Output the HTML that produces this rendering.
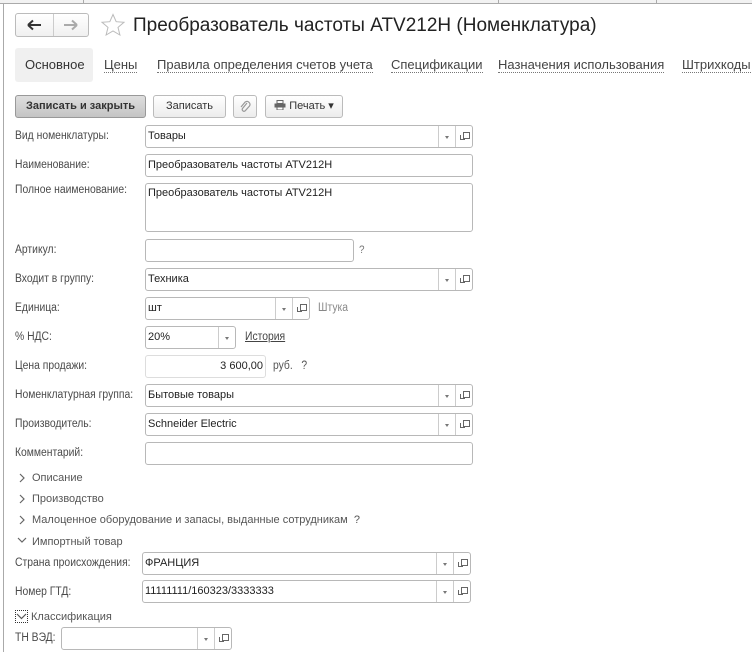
<!DOCTYPE html>
<html><head><meta charset="utf-8"><style>
*{box-sizing:border-box;margin:0;padding:0}
body{width:752px;height:652px;background:#fff;font-family:"Liberation Sans",Arial,sans-serif;position:relative;overflow:hidden;color:#333}
.a{position:absolute;white-space:nowrap}
.lbl{position:absolute;font-size:11.5px;color:#4a4a4a;white-space:nowrap;transform:scaleX(0.9);transform-origin:left}
.f{position:absolute;border:1px solid #b8b8b8;border-radius:3px;background:#fff;font-size:11px;color:#222;padding:0 2px;height:23px;line-height:21px;white-space:nowrap}
.dd{position:absolute;top:0;bottom:0;border-left:1px solid #ccc;width:17px}
.dd:after{content:"";position:absolute;left:6px;top:10px;border:2.5px solid transparent;border-top:3px solid #777}
.op{position:absolute;top:0;bottom:0;border-left:1px solid #ccc;width:17px}
.op:before{content:"";position:absolute;left:7px;top:6px;width:5px;height:5px;border:1px solid #666}
.op:after{content:"";position:absolute;left:4px;top:9px;width:4px;height:4px;border-left:1px solid #666;border-bottom:1px solid #666}
.tab{position:absolute;top:58px;font-size:13px;color:#444;border-bottom:1px dotted #777;line-height:14px}
.btn{position:absolute;top:95px;height:23px;border:1px solid #bbb;border-radius:3px;background:linear-gradient(#fff,#ececec);font-size:11.5px;color:#333;text-align:center;line-height:21px}
.sec{position:absolute;left:32px;font-size:11px;color:#555;white-space:nowrap}
</style></head><body>
<div class="a" style="left:0;top:0;width:752px;height:4px;background:#f2f2f2;border-bottom:1px solid #aaa"></div>
<div class="a" style="left:83px;top:0;width:1px;height:4px;background:#aaa"></div>
<div class="a" style="left:498px;top:0;width:1px;height:4px;background:#aaa"></div>
<div class="a" style="left:656px;top:0;width:1px;height:4px;background:#aaa"></div>
<div class="a" style="left:3px;top:4px;width:1px;height:648px;background:#aaa"></div>

<div class="a" style="left:15px;top:13px;width:74px;height:24px;border:1px solid #bbb;border-radius:3px;background:linear-gradient(#fff,#f0f0f0)"></div>
<div class="a" style="left:53px;top:14px;width:1px;height:22px;background:#ccc"></div>
<svg class="a" style="left:26px;top:19px" width="16" height="12"><path d="M2 6h13M2 6l5-4.5M2 6l5 4.5" fill="none" stroke="#333" stroke-width="2"/></svg>
<svg class="a" style="left:63px;top:19px" width="16" height="12"><path d="M1 6h13M14 6l-5-4.5M14 6l-5 4.5" fill="none" stroke="#aaa" stroke-width="2"/></svg>
<svg class="a" style="left:100px;top:13px" width="26" height="24" viewBox="0 0 26 24"><path d="M13 1.5l3.2 7.2 7.8.6-6 5.1 1.9 7.6L13 17.9 6.1 22l1.9-7.6-6-5.1 7.8-.6z" fill="none" stroke="#bbb" stroke-width="1"/></svg>
<div class="a" style="left:133px;top:13px;font-size:19px;color:#222;line-height:26px">Преобразователь частоты ATV212H (Номенклатура)</div>

<div class="a" style="left:15px;top:48px;width:78px;height:34px;background:#f0f0f0;border-radius:3px"></div>
<div class="a" style="left:25px;top:58px;font-size:13px;color:#333;line-height:14px">Основное</div>
<div class="tab" style="left:104px">Цены</div>
<div class="tab" style="left:157px">Правила определения счетов учета</div>
<div class="tab" style="left:391px">Спецификации</div>
<div class="tab" style="left:498px">Назначения использования</div>
<div class="tab" style="left:682px">Штрихкоды</div>

<div class="btn" style="left:15px;width:131px;background:linear-gradient(#dedede,#c4c4c4);border-color:#999;font-weight:bold;color:#333;font-size:11px">Записать и закрыть</div>
<div class="btn" style="left:153px;width:73px;font-size:11px">Записать</div>
<div class="btn" style="left:233px;width:24px"><svg width="12" height="14" style="margin-top:4px"><path d="M8 3L3.5 8.5a1.8 1.8 0 0 0 2.6 2.4L10.5 6a3 3 0 0 0-4.3-4L2 7" fill="none" stroke="#999" stroke-width="1.2"/></svg></div>
<div class="btn" style="left:265px;width:78px;font-size:11px"><svg width="12" height="10" style="vertical-align:-1px"><rect x="3" y="0.5" width="6" height="3" fill="none" stroke="#666"/><rect x="0.5" y="3.5" width="11" height="4" fill="#666"/><rect x="3" y="7" width="6" height="3" fill="#fff" stroke="#666"/></svg> Печать ▾</div>

<div class="lbl" style="left:15px;top:130px">Вид номенклатуры:</div>
<div class="f" style="left:145px;top:125px;width:328px">Товары<div class="dd" style="right:17px"></div><div class="op" style="right:0"></div></div>
<div class="lbl" style="left:15px;top:159px">Наименование:</div>
<div class="f" style="left:145px;top:154px;width:328px">Преобразователь частоты ATV212H</div>
<div class="lbl" style="left:15px;top:184px">Полное наименование:</div>
<div class="f" style="left:145px;top:183px;width:328px;height:49px;line-height:18px">Преобразователь частоты ATV212H</div>
<div class="lbl" style="left:15px;top:244px">Артикул:</div>
<div class="f" style="left:145px;top:239px;width:209px"></div>
<div class="lbl" style="left:359px;top:244px;color:#777;font-size:11px">?</div>
<div class="lbl" style="left:15px;top:273px">Входит в группу:</div>
<div class="f" style="left:145px;top:268px;width:328px">Техника<div class="dd" style="right:17px"></div><div class="op" style="right:0"></div></div>
<div class="lbl" style="left:15px;top:302px">Единица:</div>
<div class="f" style="left:145px;top:297px;width:165px">шт<div class="dd" style="right:17px"></div><div class="op" style="right:0"></div></div>
<div class="lbl" style="left:318px;top:302px;color:#888">Штука</div>
<div class="lbl" style="left:15px;top:331px">% НДС:</div>
<div class="f" style="left:145px;top:326px;width:91px">20%<div class="dd" style="right:0"></div></div>
<div class="lbl" style="left:245px;top:331px;color:#444;text-decoration:underline">История</div>
<div class="lbl" style="left:15px;top:360px">Цена продажи:</div>
<div class="f" style="left:145px;top:355px;width:121px;text-align:right;border-color:#ddd">3 600,00</div>
<div class="lbl" style="left:273px;top:360px;color:#555">руб. &nbsp;&nbsp;?</div>
<div class="lbl" style="left:15px;top:389px">Номенклатурная группа:</div>
<div class="f" style="left:145px;top:384px;width:328px">Бытовые товары<div class="dd" style="right:17px"></div><div class="op" style="right:0"></div></div>
<div class="lbl" style="left:15px;top:418px">Производитель:</div>
<div class="f" style="left:145px;top:413px;width:328px">Schneider Electric<div class="dd" style="right:17px"></div><div class="op" style="right:0"></div></div>
<div class="lbl" style="left:15px;top:447px">Комментарий:</div>
<div class="f" style="left:145px;top:442px;width:328px"></div>

<div class="sec" style="top:472px">Описание</div>
<div class="sec" style="top:493px">Производство</div>
<div class="sec" style="top:514px">Малоценное оборудование и запасы, выданные сотрудникам&nbsp; ?</div>
<div class="sec" style="top:536px">Импортный товар</div>
<svg class="a" style="left:17px;top:473px" width="10" height="72"><path d="M3 1l4 4-4 4M3 22l4 4-4 4M3 43l4 4-4 4M1 65l4 4 4-4" fill="none" stroke="#666" stroke-width="1.2"/></svg>

<div class="lbl" style="left:15px;top:557px">Страна происхождения:</div>
<div class="f" style="left:142px;top:552px;width:329px">ФРАНЦИЯ<div class="dd" style="right:17px"></div><div class="op" style="right:0"></div></div>
<div class="lbl" style="left:15px;top:586px">Номер ГТД:</div>
<div class="f" style="left:142px;top:580px;width:329px">11111111/160323/3333333<div class="dd" style="right:17px"></div><div class="op" style="right:0"></div></div>
<div class="a" style="left:15px;top:610px;width:13px;height:13px;border:1px dotted #333"></div>
<svg class="a" style="left:15px;top:610px" width="13" height="13"><path d="M2 4l4.5 4.5L11 4" fill="none" stroke="#555" stroke-width="1.2"/></svg>
<div class="sec" style="left:31px;top:611px">Классификация</div>
<div class="lbl" style="left:15px;top:632px">ТН ВЭД:</div>
<div class="f" style="left:61px;top:627px;width:171px"><div class="dd" style="right:17px"></div><div class="op" style="right:0"></div></div>
</body></html>
